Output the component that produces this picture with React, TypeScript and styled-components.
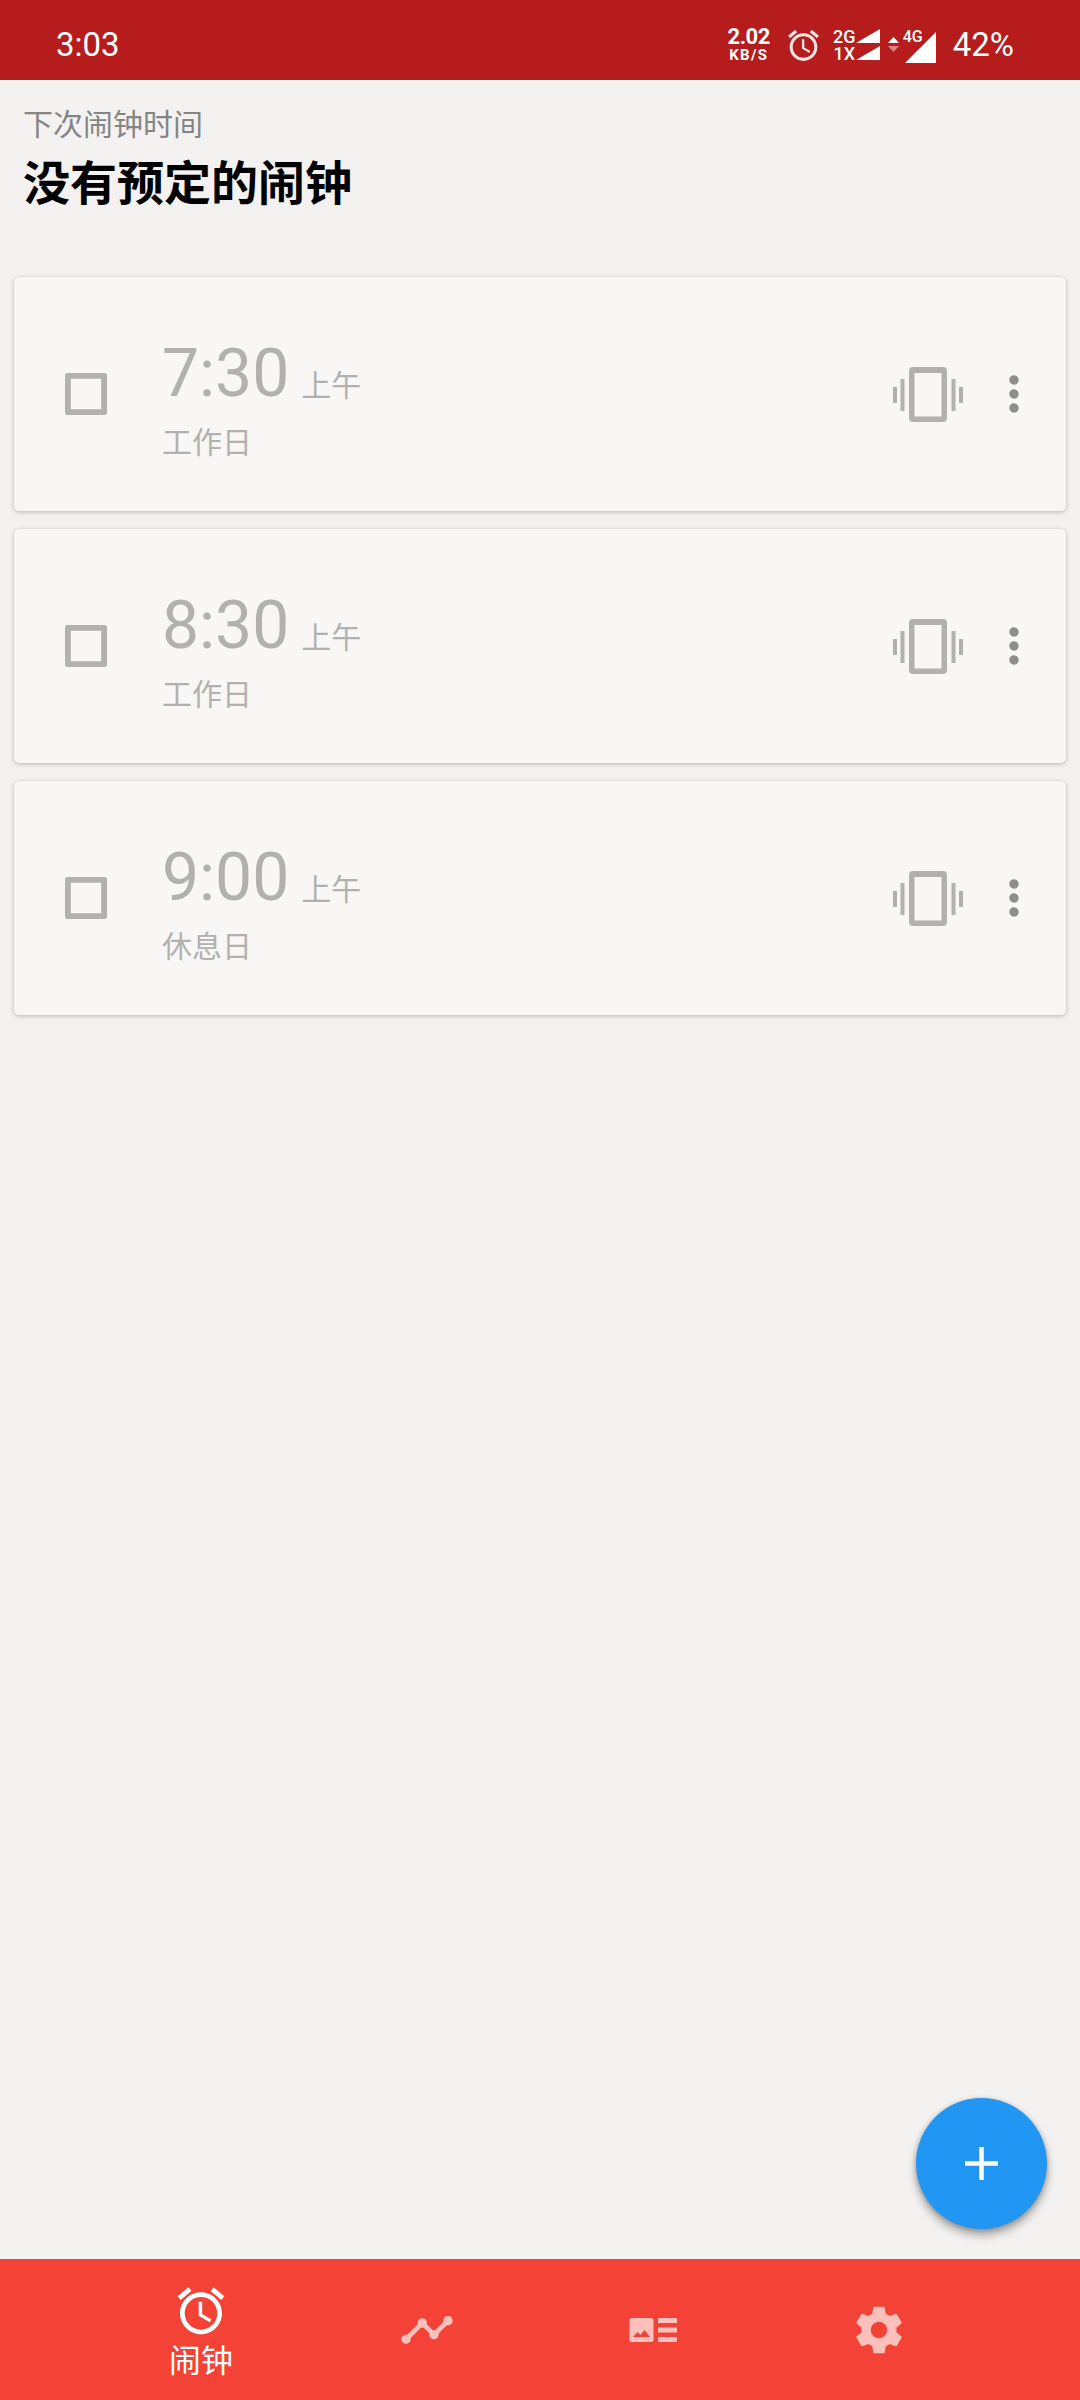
import * as React from 'react';
import styled, { createGlobalStyle } from 'styled-components';

const GlobalStyle = createGlobalStyle`
	html, body {
		margin: 0;
		padding: 0;
		background: #f3f2f0;
	}
	* {
		box-sizing: border-box;
	}
`;

const FONT = `Roboto, "Noto Sans CJK SC", sans-serif`;

const Screen = styled.div`
	position: relative;
	display: flex;
	flex-direction: column;
	width: 1080px;
	height: 2400px;
	overflow: hidden;
	background: #f3f2f0;
	font-family: ${FONT};
`;

const StatusBar = styled.header`
	display: flex;
	align-items: center;
	justify-content: space-between;
	flex: none;
	height: 80px;
	padding: 0 66px 0 56px;
	background: #b71c1c;
	color: #fff;
`;

const Clock = styled.span`
	margin-top: 9px;
	font-size: 33px;
	line-height: 36px;
`;

const StatusIcons = styled.div`
	display: flex;
	align-items: center;
	height: 80px;
`;

const Speed = styled.div`
	display: flex;
	flex-direction: column;
	align-items: center;
	width: 44px;
	margin: 3px 14px 0 0;
	font-weight: 700;
`;

const SpeedValue = styled.span`
	font-size: 22px;
	line-height: 20px;
	letter-spacing: -0.4px;
	margin-top: 6px;
`;

const SpeedUnit = styled.span`
	font-size: 15px;
	line-height: 15px;
	letter-spacing: 1.3px;
	margin-top: 1px;
`;

const StatusAlarm = styled.svg`
	width: 37px;
	height: 37px;
	margin: 11px 11px 0 0;
	fill: #fbe4e4;
`;

const DualSignal = styled.div`
	display: grid;
	grid-template-columns: 23px 23px;
	grid-auto-rows: 17px;
	margin-top: 9px;
	align-items: center;
`;

const SignalLabel = styled.span`
	font-size: 18px;
	line-height: 17px;
	font-weight: 500;
	text-align: center;
`;

const SmallBars = styled.svg`
	width: 24px;
	height: 14px;
	fill: #fff;
`;

const Arrows = styled.svg`
	width: 13px;
	height: 16px;
	margin: 10px 0 0 8px;
`;

const MainSignal = styled.div`
	position: relative;
	width: 34px;
	height: 32px;
	margin: 14px 16px 0 3px;
`;

const MainBars = styled.svg`
	position: absolute;
	left: 2px;
	top: 1px;
	width: 31px;
	height: 31px;
	fill: #fff;
`;

const MainLabel = styled.span`
	position: absolute;
	left: 0;
	top: -2px;
	font-size: 16px;
	line-height: 15px;
	font-weight: 500;
`;

const Battery = styled.span`
	margin-top: 9px;
	font-size: 33px;
	line-height: 36px;
`;

const Header = styled.section`
	flex: none;
	height: 197px;
	padding: 23px 23px 0;
`;

const NextLabel = styled.div`
	font-size: 30px;
	line-height: 44px;
	color: #858585;
`;

const NextValue = styled.h1`
	margin: 6px 0 0;
	font-size: 47px;
	line-height: 62px;
	font-weight: 700;
	color: #000;
`;

const AlarmList = styled.main`
	display: flex;
	flex: 1;
	flex-direction: column;
	gap: 18px;
	padding: 0 14px;
`;

const Card = styled.article`
	display: flex;
	align-items: center;
	flex: none;
	height: 234px;
	padding: 0 24px 0 44px;
	border-radius: 5px;
	background: #f8f7f5;
	box-shadow: 0 1px 4px rgba(0, 0, 0, 0.26);
`;

const CheckIcon = styled.svg`
	flex: none;
	width: 56px;
	height: 56px;
	fill: #b2b1af;
`;

const AlarmInfo = styled.div`
	flex: 1;
	margin-left: 48px;
	padding-top: 10px;
`;

const TimeRow = styled.div`
	display: flex;
	align-items: baseline;
	color: #b2b1af;
`;

const Time = styled.span`
	font-size: 66px;
	line-height: 80px;
`;

const Meridiem = styled.span`
	margin-left: 12px;
	font-size: 30px;
`;

const Repeat = styled.div`
	margin-top: 7px;
	font-size: 30px;
	line-height: 44px;
	color: #b2b1af;
`;

const VibrateIcon = styled.svg`
	flex: none;
	width: 70px;
	height: 55px;
	fill: #b2b1af;
`;

const MoreIcon = styled.svg`
	flex: none;
	width: 56px;
	height: 56px;
	margin-left: 23px;
	fill: #8e8e8d;
`;

const Fab = styled.button`
	position: absolute;
	left: 916px;
	top: 2098px;
	display: flex;
	align-items: center;
	justify-content: center;
	width: 131px;
	height: 131px;
	padding: 0 1px 1px 0;
	border: 0;
	border-radius: 50%;
	background: #2196f3;
	box-shadow: 0 6px 10px rgba(0, 0, 0, 0.32), 0 1px 5px rgba(0, 0, 0, 0.2);
`;

const FabIcon = styled.svg`
	width: 33px;
	height: 33px;
	fill: #fff;
`;

const BottomNav = styled.nav`
	display: grid;
	grid-template-columns: repeat(4, 226px);
	flex: none;
	height: 141px;
	padding: 0 88px;
	background: #f44336;
`;

const Tab = styled.div`
	display: flex;
	flex-direction: column;
	align-items: center;
	justify-content: center;
`;

const ActiveTab = styled(Tab)`
	justify-content: flex-start;
	padding-top: 24px;
`;

const TabIcon = styled.svg<{ $active?: boolean }>`
	display: block;
	width: 56px;
	height: 56px;
	fill: ${props => (props.$active ? '#fff' : '#ffc0bb')};
`;

const TabLabel = styled.span`
	margin-top: 0;
	font-size: 32px;
	line-height: 44px;
	color: #fff;
`;

const ALARM_PATH =
	'M22 5.72l-4.6-3.86-1.29 1.53 4.6 3.86L22 5.72zM7.88 3.39L6.6 1.86 2 5.71l1.29 1.53 4.59-3.85zM12.5 8H11v6l4.75 2.85.75-1.23-4-2.37V8zM12 4c-4.97 0-9 4.03-9 9s4.02 9 9 9c4.97 0 9-4.03 9-9s-4.03-9-9-9zm0 16c-3.87 0-7-3.13-7-7s3.13-7 7-7 7 3.13 7 7-3.13 7-7 7z';

const alarms = [
	{ time: '7:30', repeat: '工作日' },
	{ time: '8:30', repeat: '工作日' },
	{ time: '9:00', repeat: '休息日' }
];

const AlarmCard = ({ time, repeat }: { time: string; repeat: string }) => (
	<Card>
		<CheckIcon viewBox="0 0 24 24">
			<path
				fillRule="evenodd"
				d="M4 3h16a1 1 0 0 1 1 1v16a1 1 0 0 1-1 1H4a1 1 0 0 1-1-1V4a1 1 0 0 1 1-1zM5.500 5.500v13h13v-13z"
			/>
		</CheckIcon>
		<AlarmInfo>
			<TimeRow>
				<Time>{time}</Time>
				<Meridiem>上午</Meridiem>
			</TimeRow>
			<Repeat>{repeat}</Repeat>
		</AlarmInfo>
		<VibrateIcon viewBox="0 0 70 55">
			<path d="M0 20h4v16H0zM7.500 12h4v32h-4zM58.500 12h4v32h-4zM66 20h4v16h-4z" />
			<path
				fillRule="evenodd"
				d="M20 0h30a4 4 0 0 1 4 4v47a4 4 0 0 1-4 4H20a4 4 0 0 1-4-4V4a4 4 0 0 1 4-4zM21.500 6v43.500h27V6z"
			/>
		</VibrateIcon>
		<MoreIcon viewBox="0 0 24 24">
			<path d="M12 8c1.100 0 2-.9 2-2s-.9-2-2-2-2 .9-2 2 .9 2 2 2zm0 2c-1.100 0-2 .9-2 2s.9 2 2 2 2-.9 2-2-.9-2-2-2zm0 6c-1.100 0-2 .9-2 2s.9 2 2 2 2-.9 2-2-.9-2-2-2z" />
		</MoreIcon>
	</Card>
);

export default function App() {
	return (
		<Screen>
			<GlobalStyle />
			<StatusBar>
				<Clock>3:03</Clock>
				<StatusIcons>
					<Speed>
						<SpeedValue>2.02</SpeedValue>
						<SpeedUnit>KB/S</SpeedUnit>
					</Speed>
					<StatusAlarm viewBox="0 0 24 24">
						<path d={ALARM_PATH} />
					</StatusAlarm>
					<DualSignal>
						<SignalLabel>2G</SignalLabel>
						<SmallBars viewBox="0 0 24 14">
							<path d="M0 14L24 0v14z" />
						</SmallBars>
						<SignalLabel>1X</SignalLabel>
						<SmallBars viewBox="0 0 24 14">
							<path d="M0 14L24 0v14z" />
						</SmallBars>
					</DualSignal>
					<Arrows viewBox="0 0 13 16">
						<path d="M1 6l5.500-6L12 6z" fill="#fff" />
						<path d="M1 9h11l-5.500 6z" fill="#e0807f" />
					</Arrows>
					<MainSignal>
						<MainBars viewBox="0 0 31 31">
							<path d="M0 31L31 0v31z" />
						</MainBars>
						<MainLabel>4G</MainLabel>
					</MainSignal>
					<Battery>42%</Battery>
				</StatusIcons>
			</StatusBar>
			<Header>
				<NextLabel>下次闹钟时间</NextLabel>
				<NextValue>没有预定的闹钟</NextValue>
			</Header>
			<AlarmList>
				{alarms.map(alarm => (
					<AlarmCard key={alarm.time} time={alarm.time} repeat={alarm.repeat} />
				))}
			</AlarmList>
			<Fab aria-label="add">
				<FabIcon viewBox="0 0 33 33">
					<path d="M14.250 0h4.500v14.250H33v4.500H18.750V33h-4.500V18.750H0v-4.500h14.250z" />
				</FabIcon>
			</Fab>
			<BottomNav>
				<ActiveTab>
					<TabIcon $active viewBox="0 0 24 24">
						<path d={ALARM_PATH} />
					</TabIcon>
					<TabLabel>闹钟</TabLabel>
				</ActiveTab>
				<Tab>
					<TabIcon viewBox="0 0 24 24">
						<path d="M23 8c0 1.1-.9 2-2 2-.18 0-.35-.02-.51-.07l-3.56 3.55c.05.16.07.34.07.52 0 1.1-.9 2-2 2s-2-.9-2-2c0-.18.02-.36.07-.52l-2.55-2.55c-.16.05-.34.07-.52.07s-.36-.02-.52-.07l-4.55 4.56c.05.16.07.33.07.51 0 1.1-.9 2-2 2s-2-.9-2-2 .9-2 2-2c.18 0 .35.02.51.07l4.56-4.55C8.02 9.36 8 9.18 8 9c0-1.1.9-2 2-2s2 .9 2 2c0 .18-.02.36-.07.52l2.55 2.55c.16-.05.34-.07.52-.07s.36.02.52.07l3.55-3.56C19.02 8.35 19 8.18 19 8c0-1.1.9-2 2-2s2 .9 2 2z" />
					</TabIcon>
				</Tab>
				<Tab>
					<TabIcon viewBox="0 0 56 56">
						<path
							fillRule="evenodd"
							d="M7 16h19a2.5 2.5 0 0 1 2.5 2.5v19A2.500 2.500 0 0 1 26 40H7a2.500 2.500 0 0 1-2.500-2.500v-19A2.500 2.500 0 0 1 7 16zM8 35h17l-5.500-7-4 5-3-3z"
						/>
						<path d="M33 16h19v5H33zM33 25.500h19v5H33zM33 35h19v5H33z" />
					</TabIcon>
				</Tab>
				<Tab>
					<TabIcon viewBox="0 0 24 24">
						<path d="M19.43 12.98c.04-.32.07-.64.07-.98s-.03-.66-.07-.98l2.11-1.65c.19-.15.24-.42.12-.64l-2-3.46c-.12-.22-.39-.3-.61-.22l-2.49 1c-.52-.4-1.08-.73-1.69-.98l-.38-2.65C14.46 2.18 14.25 2 14 2h-4c-.25 0-.46.18-.49.42l-.38 2.65c-.61.25-1.17.59-1.69.98l-2.49-1c-.23-.09-.49 0-.61.22l-2 3.46c-.13.22-.07.49.12.64l2.11 1.65c-.04.32-.07.65-.07.98s.03.66.07.98l-2.11 1.65c-.19.15-.24.42-.12.64l2 3.46c.12.22.39.3.61.22l2.49-1c.52.4 1.08.73 1.69.98l.38 2.65c.03.24.24.42.49.42h4c.25 0 .46-.18.49-.42l.38-2.65c.61-.25 1.17-.59 1.69-.98l2.49 1c.23.09.49 0 .61-.22l2-3.46c.12-.22.07-.49-.12-.64l-2.11-1.65zM12 15.500c-1.930 0-3.500-1.570-3.500-3.500s1.570-3.500 3.500-3.500 3.500 1.570 3.500 3.500-1.570 3.500-3.500 3.500z" />
					</TabIcon>
				</Tab>
			</BottomNav>
		</Screen>
	);
}
